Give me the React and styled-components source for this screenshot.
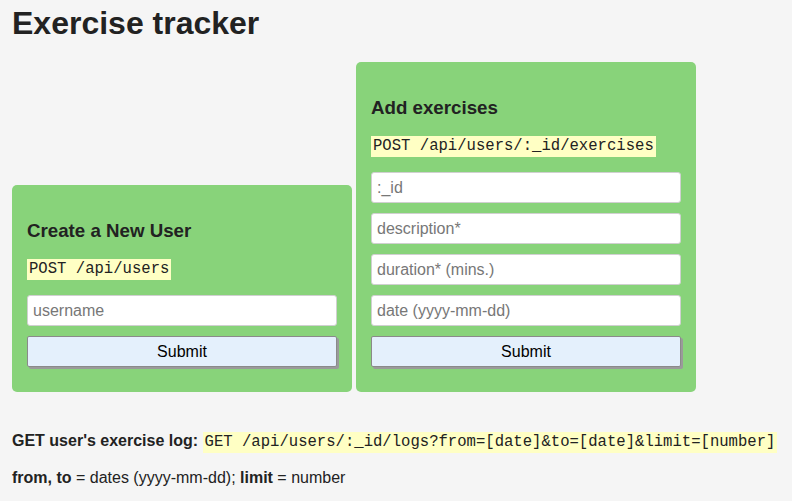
import React from 'react'
import styled, { createGlobalStyle } from 'styled-components'

const GlobalStyle = createGlobalStyle`
    * {
        box-sizing: border-box;
    }
    body {
        margin: 0;
        background-color: #f5f5f5;
        color: #222;
        font-family: 'Liberation Sans', Arial, sans-serif;
        font-size: 16px;
    }
`

const Container = styled.div`
    padding: 0 12px;
`

const Title = styled.h1`
    font-size: 32px;
    font-weight: 700;
    margin: 5px 0 20px;
    line-height: 37px;
`

const Forms = styled.div`
    display: flex;
    align-items: flex-end;
    gap: 4px;
`

const Form = styled.form`
    width: 340px;
    padding: 15px;
    background-color: #88d37a;
    border-radius: 5px;
`

const FormTitle = styled.h3`
    font-size: 18.72px;
    font-weight: 700;
    margin: 20px 0 0;
    line-height: 21px;
`

const Endpoint = styled.p`
    margin: 18px 0 15px;
    height: 21px;
`

const Code = styled.code`
    display: inline-block;
    font-family: 'Liberation Mono', 'Courier New', monospace;
    font-size: 15.6px;
    line-height: 17px;
    padding: 2px 2px;
    background-color: #ffffc4;
    color: #222;
`

const Input = styled.input`
    display: block;
    width: 310px;
    height: 31px;
    margin: 0 0 10px;
    padding: 0 5px;
    border: 1px solid #d0d0d0;
    border-radius: 3px;
    background: #fff;
    font-family: 'Liberation Sans', Arial, sans-serif;
    font-size: 16px;
    color: #222;
    &::placeholder {
        color: #777;
    }
`

const Submit = styled.button`
    display: block;
    width: 310px;
    height: 31px;
    margin: 0 0 10px;
    padding: 0;
    border: 1px solid #8a8a8a;
    border-radius: 2px;
    background-color: #e4f0fc;
    box-shadow: 2px 2px 0 #9a9a9a;
    font-family: 'Liberation Sans', Arial, sans-serif;
    font-size: 16px;
    color: #000;
`

const Note = styled.p`
    margin: ${(props) => props.top}px 0 0;
    line-height: 21px;
`

const App = () => {
    return (
        <React.Fragment>
            <GlobalStyle />
            <Container>
                <Title>Exercise tracker</Title>
                <Forms>
                    <Form onSubmit={(e) => e.preventDefault()}>
                        <FormTitle>Create a New User</FormTitle>
                        <Endpoint>
                            <Code>POST /api/users</Code>
                        </Endpoint>
                        <Input type="text" name="username" placeholder="username" />
                        <Submit type="submit">Submit</Submit>
                    </Form>
                    <Form onSubmit={(e) => e.preventDefault()}>
                        <FormTitle>Add exercises</FormTitle>
                        <Endpoint>
                            <Code>POST /api/users/:_id/exercises</Code>
                        </Endpoint>
                        <Input type="text" name=":_id" placeholder=":_id" />
                        <Input type="text" name="description" placeholder="description*" />
                        <Input type="text" name="duration" placeholder="duration* (mins.)" />
                        <Input type="text" name="date" placeholder="date (yyyy-mm-dd)" />
                        <Submit type="submit">Submit</Submit>
                    </Form>
                </Forms>
                <Note top={38}>
                    <strong>GET user's exercise log: </strong>
                    <Code>GET /api/users/:_id/logs?from=[date]&amp;to=[date]&amp;limit=[number]</Code>
                </Note>
                <Note top={14}>
                    <strong>from, to</strong> = dates (yyyy-mm-dd); <strong>limit</strong> = number
                </Note>
            </Container>
        </React.Fragment>
    )
}

export default App
